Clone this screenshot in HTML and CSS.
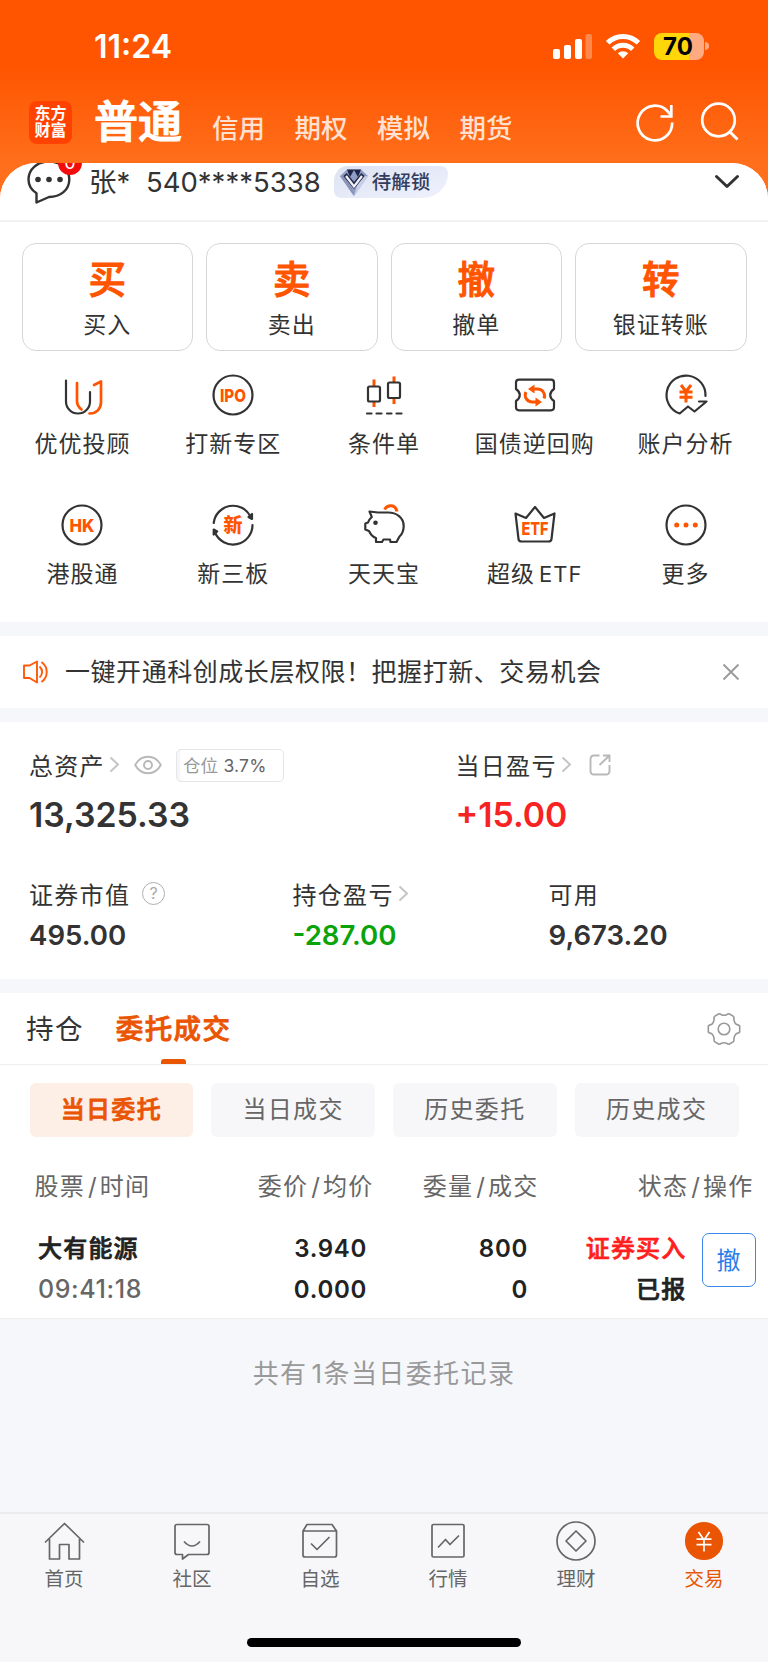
FILE: index.html
```html
<!DOCTYPE html>
<html lang="zh-CN">
<head>
    <meta charset="UTF-8">
    <meta name="viewport" content="width=device-width, initial-scale=1.0">
    <title>东方财富 - 交易</title>
    <link rel="stylesheet" href="styles.css">
</head>
<body>

<header class="header">
    <div class="status-bar">
        <span class="time">11:24</span>
        <svg class="signal" width="40" height="26" viewBox="0 0 40 26" fill="#fff">
            <rect x="0" y="16" width="7" height="10" rx="2"/>
            <rect x="11" y="12" width="7" height="14" rx="2"/>
            <rect x="22" y="6" width="7" height="20" rx="2"/>
            <rect x="32.500" y="1" width="6.500" height="25" rx="2" opacity=".3"/>
        </svg>
        <svg class="wifi" width="34" height="26" viewBox="0 0 34 26" fill="none" stroke="#fff" stroke-width="5">
            <path d="M1.600 9.700A22 22 0 0 1 32.400 9.700"/>
            <path d="M7.300 16.200A13.800 13.800 0 0 1 26.700 16.200"/>
            <path d="M17 25.500l-5.200-5.300a7.800 7.800 0 0 1 10.400 0z" fill="#fff" stroke="none"/>
        </svg>
        <div class="battery">70</div>
        <div class="battery-cap"></div>
    </div>
    <nav class="top-nav">
        <div class="logo">东方<br>财富</div>
        <div class="top-tabs">
            <span class="current">普通</span>
            <span>信用</span>
            <span>期权</span>
            <span>模拟</span>
            <span>期货</span>
        </div>
        <svg class="refresh" width="40" height="40" viewBox="0 0 40 40" fill="none" stroke="#fff" stroke-width="2.700">
            <path d="M37.200 20.500A17.300 17.300 0 1 1 32.800 9.500L36 13.200"/>
            <path d="M36.300 3v11.500H25.500"/>
        </svg>
        <svg class="search" width="40" height="40" viewBox="0 0 40 40" fill="none" stroke="#fff" stroke-width="2.700">
            <circle cx="18.500" cy="18" r="16.300"/>
            <path d="M29.500 29.500l8 8" stroke-width="3"/>
        </svg>
    </nav>
</header>

<main class="sheet">
    <section class="account">
        <div class="chat">
            <svg width="44" height="46" viewBox="0 0 44 46" fill="none" stroke="#333" stroke-width="2.400" stroke-linejoin="round">
                <path d="M9.500 43.500V34.200C4.500 31 1.500 26 1.500 20.500 1.500 10 10.500 2.500 22 2.500s20.300 7.500 20.300 18S33.500 38 22 38z"/>
                <g fill="#333" stroke="none"><circle cx="11" cy="20.500" r="2.800"/><circle cx="22" cy="20.500" r="2.800"/><circle cx="33" cy="20.500" r="2.800"/></g>
            </svg>
            <span class="unread">0</span>
        </div>
        <span class="name">张*</span>
        <span class="number">540****5338</span>
        <div class="level">
            <svg width="30" height="29" viewBox="0 0 30 29">
                <path d="M1 8L8 1.500H22L29 8 15 28z" fill="#8f9cc4"/>
                <path d="M8 1.500L11 9 15 2l4 7 3-7.500z" fill="#1e2549"/>
                <path d="M1 8h8l6 20z" fill="#8a94b8"/>
                <path d="M29 8h-8l-6 20z" fill="#c9d0e6"/>
                <path d="M6 6.500l9 11 9-11" fill="none" stroke="#272d4d" stroke-width="4.500"/>
                <path d="M7 8l8 10.500 8-10.500" fill="none" stroke="#f2f3fa" stroke-width="2.200"/>
            </svg>
            待解锁
        </div>
        <svg class="expand" width="26" height="16" viewBox="0 0 26 16" fill="none" stroke="#333" stroke-width="3" stroke-linecap="round" stroke-linejoin="round"><path d="M2.500 2.500L13 12.500l10.500-10"/></svg>
    </section>

    <section class="trade">
        <div class="trade-btn"><b>买</b>买入</div>
        <div class="trade-btn"><b>卖</b>卖出</div>
        <div class="trade-btn"><b>撤</b>撤单</div>
        <div class="trade-btn"><b>转</b>银证转账</div>
    </section>

    <section class="tools">
        <div class="tool">
            <svg viewBox="0 0 44 44"><path d="M6 7.500V28.500a12 12 0 0 0 24 0V19"/><path class="o" d="M17 10V28c0 4 1.800 6.500 4.500 8.500M34 12l7-3.500V29c0 7-4.500 11.500-11.500 11.500"/></svg>
            优优投顾
        </div>
        <div class="tool">
            <svg viewBox="0 0 44 44"><circle cx="22" cy="22" r="19.500"/><text x="22" y="28.500" textLength="26" lengthAdjust="spacingAndGlyphs">IPO</text></svg>
            打新专区
        </div>
        <div class="tool">
            <svg viewBox="0 0 44 44"><path class="o thick" d="M12 6.500V13M12 28v6M32 3.500V9M32 25v6"/><rect x="6" y="13.500" width="12" height="15" rx="1.500"/><rect x="26" y="9.500" width="12" height="15.500" rx="1.500"/><path d="M5 40.500h4.500M14.500 40.500h5M25 40.500h4.500M34.500 40.500h5"/></svg>
            条件单
        </div>
        <div class="tool">
            <svg viewBox="0 0 44 44"><path d="M6 6.700H38q3 0 3 3v6.300q-3.800 2.500-3.800 6t3.800 6v6.300q0 3-3 3H6q-3 0-3-3V28q3.800-2.500 3.800-6T3 16V9.700q0-3 3-3z"/><path class="o thick" d="M21 16h3.500a7 7 0 0 1 6.600 9.500M23 29h-3.500a7 7 0 0 1-6.600-10"/><path class="of" d="M21.500 11.500v9l-6.500-4.500zM22.500 24.500v9l6.500-4.500z"/></svg>
            国债逆回购
        </div>
        <div class="tool">
            <svg viewBox="0 0 44 44"><path d="M41.500 23A19.500 19.500 0 1 0 15.700 40.500L24 33.500l6.500 5L42.500 28.500H35"/><path class="o thick" d="M17 12l5 6.500 5-6.500M22 18.500V29.500M15.500 19h13M15.500 24.200h13"/></svg>
            账户分析
        </div>
        <div class="tool">
            <svg viewBox="0 0 44 44"><circle cx="22" cy="22" r="19.500"/><text x="22" y="28.500" textLength="25" lengthAdjust="spacingAndGlyphs">HK</text></svg>
            港股通
        </div>
        <div class="tool">
            <svg viewBox="0 0 44 44"><path d="M2.700 20A19.500 19.500 0 0 1 39.500 13.500M41.500 22A19.500 19.500 0 0 1 4 29.500"/><path d="M41 11v5l-3.500-2zM2.700 31.500v-5l3.500 2z" fill="#333"/><text class="xin" x="22" y="29">新</text></svg>
            新三板
        </div>
        <div class="tool">
            <svg viewBox="0 0 44 44"><path d="M24 9.500H16L7.500 8.500l2.300 5.500C8 15.500 6.700 17.300 6 19.500l-2.700 1v6L7 28c1.500 3.300 4 6 7 7v4h6l1.500-2.500H28l.5 2.500h6l3-5.500c2.800-2.500 4.200-6 4.200-10.500C41.700 14.500 34.500 9.500 26 9.500z"/><circle cx="13.500" cy="19.700" r="2.300" fill="#333" stroke="none"/><path class="o thick" d="M22.500 6.500C26 1 33.500 1.500 35 8.500"/></svg>
            天天宝
        </div>
        <div class="tool">
            <svg viewBox="0 0 44 44"><path d="M2.500 10.500L13 15l9-11 9 11 10.500-4.500L38.500 36q-.3 2.500-3 2.500h-27q-2.700 0-3-2.500z"/><text x="22" y="32" textLength="27" lengthAdjust="spacingAndGlyphs">ETF</text></svg>
            <span>超级<i>ETF</i></span>
        </div>
        <div class="tool">
            <svg viewBox="0 0 44 44"><circle cx="22" cy="22" r="19.500"/><path class="of" d="M10.200 22a2.500 2.500 0 1 0 5 0a2.500 2.500 0 1 0-5 0M19.500 22a2.500 2.500 0 1 0 5 0a2.500 2.500 0 1 0-5 0M28.800 22a2.500 2.500 0 1 0 5 0a2.500 2.500 0 1 0-5 0"/></svg>
            更多
        </div>
    </section>

    <section class="notice">
        <svg width="26" height="24" viewBox="0 0 26 24" fill="none" stroke="#ff5a0a" stroke-width="1.900" stroke-linejoin="round">
            <path d="M1 5.500h5.500L14 1.500v21L6.500 18H1z"/><path d="M16.500 6.500c3.500 3 3.500 8 0 11M18.500 2c7 5 7 15 0 20"/>
        </svg>
        <p>一键开通科创成长层权限！把握打新、交易机会</p>
        <svg width="18" height="18" viewBox="0 0 18 18" fill="none" stroke="#999" stroke-width="1.800"><path d="M1.500 1.500l15 15M16.500 1.500l-15 15"/></svg>
    </section>

    <section class="assets">
        <div class="row main">
            <div class="cell">
                <div class="label">总资产
                    <svg class="more" width="11" height="17" viewBox="0 0 11 17"><path d="M1.500 1.500l7.500 7-7.500 7"/></svg>
                    <svg class="eye" width="28" height="20" viewBox="0 0 28 20"><path d="M1.200 10C7-1 21-1 26.800 10 21 21 7 21 1.200 10z"/><circle cx="14" cy="10" r="4"/></svg>
                    <span class="tag">仓位 <em>3.7%</em></span>
                </div>
                <div class="value">13,325.33</div>
            </div>
            <div class="cell">
                <div class="label">当日盈亏
                    <svg class="more" width="11" height="17" viewBox="0 0 11 17"><path d="M1.500 1.500l7.500 7-7.500 7"/></svg>
                    <svg class="share" width="22" height="22" viewBox="0 0 22 22"><path d="M10.500 1.500H5q-3.500 0-3.500 3.500v12q0 3.500 3.500 3.500h12q3.500 0 3.500-3.500V11M10.500 11L20 2M14 1.500h6.500V8"/></svg>
                </div>
                <div class="value up">+15.00</div>
            </div>
        </div>
        <div class="row sub">
            <div class="cell">
                <div class="label">证券市值 <span class="help">?</span></div>
                <div class="value">495.00</div>
            </div>
            <div class="cell">
                <div class="label">持仓盈亏
                    <svg class="more" width="11" height="17" viewBox="0 0 11 17"><path d="M1.500 1.500l7.500 7-7.500 7"/></svg>
                </div>
                <div class="value down">-287.00</div>
            </div>
            <div class="cell">
                <div class="label">可用</div>
                <div class="value">9,673.20</div>
            </div>
        </div>
    </section>

    <section class="orders">
        <div class="order-tabs">
            <span>持仓</span>
            <span class="active">委托成交</span>
            <svg width="34" height="34" viewBox="0 0 34 34" fill="none" stroke="#999" stroke-width="1.600" stroke-linejoin="round">
                <path d="M12 1.800q1.500 0 2.300 1 2.700 1 5.400 0 .8-1 2.300-1l4.500 2.600q.8 1.500.3 3 .5 3.300 2.500 5 2.500.3 3.400 1.600v6q-.9 1.300-3.400 1.600-2 1.700-2.500 5 .5 1.500-.3 3L22 32.200q-1.500 0-2.300-1-2.700-1-5.400 0-.8 1-2.300 1l-4.500-2.600q-.8-1.500-.3-3-.5-3.300-2.500-5-2.500-.3-3.400-1.600v-6q.9-1.300 3.400-1.600 2-1.700 2.500-5-.5-1.500.3-3z"/><circle cx="17" cy="17" r="5.800"/>
            </svg>
        </div>
        <div class="filters">
            <span class="on">当日委托</span>
            <span>当日成交</span>
            <span>历史委托</span>
            <span>历史成交</span>
        </div>
        <div class="grid thead">
            <span>股票<i>/</i>时间</span>
            <span>委价<i>/</i>均价</span>
            <span>委量<i>/</i>成交</span>
            <span>状态<i>/</i>操作</span>
        </div>
        <div class="grid order">
            <div><span class="zh">大有能源</span><small>09:41:18</small></div>
            <div>3.940<br>0.000</div>
            <div>800<br>0</div>
            <div class="zh"><span class="buy">证券买入</span><br>已报</div>
            <button class="cancel">撤</button>
        </div>
    </section>
    <p class="summary">共有<i>1</i>条当日委托记录</p>
</main>

<footer class="tabbar">
    <div class="tabs">
        <div><svg viewBox="0 0 40 40"><path d="M1 21.500L20.500 2.500 40 21.500M5.500 18V38H15.500V23.500H25V38H35.500V18"/></svg>首页</div>
        <div><svg viewBox="0 0 40 40"><path d="M5 3.500H35q2 0 2 2v26q0 2-2 2H16.500L10.500 38V33.500H5q-2 0-2-2v-26q0-2 2-2zM12 20.500q8 9 16 0"/></svg>社区</div>
        <div><svg viewBox="0 0 40 40"><path d="M7 3.500H32l4.500 6.500v24q0 2-2 2H5q-2 0-2-2V10zM3 10H36.500M11 22.500l6 6L29.500 16"/></svg>自选</div>
        <div><svg viewBox="0 0 40 40"><rect x="4" y="3.500" width="32" height="32.500" rx="1.500"/><path d="M10 26.500l7.500-8 4.500 5L31 14.500"/></svg>行情</div>
        <div><svg viewBox="0 0 40 40"><circle cx="20" cy="20" r="19"/><path d="M20 10L30 20 20 30 10 20z"/></svg>理财</div>
        <div class="active"><svg viewBox="0 0 40 40"><circle cx="20" cy="20" r="18.200"/><path d="M14.500 11l5.500 8 5.500-8M20 19v11.500M12.500 18.200h15M12.500 23.700h15"/></svg>交易</div>
    </div>
    <div class="home-indicator"></div>
</footer>

</body>
</html>
```
FILE: styles.css
```css
* { box-sizing: border-box; }
body { margin: 0; width: 768px; height: 1662px; display: flex; flex-direction: column; overflow: hidden; font-family: Inter, "Noto Sans CJK SC", sans-serif; color: #333; background: linear-gradient(#ff5500 65px, #ff6f1c 165px); }
svg { display: block; flex: none; overflow: visible; }
p { margin: 0; }
i, em { font-style: normal; }

/* header */
.header { height: 163px; flex: none; color: #fff; }
.status-bar { display: flex; align-items: center; height: 92px; padding: 0 63px 0 94px; }
.time { flex: 1; margin-top: 2px; font-size: 32px; font-weight: 600; line-height: 40px; }
.wifi { margin: 0 14px 0 13px; }
.battery { width: 50px; height: 27px; padding-right: 2px; border-radius: 8px; background: linear-gradient(90deg, #ffd60a 71%, #ffaa80 71%); color: #000; font-size: 24px; font-weight: 700; line-height: 27px; text-align: center; }
.battery-cap { width: 4px; height: 8px; margin-left: 1px; border-radius: 0 4px 4px 0; background: #ffaa80; margin-right: -4px; }
.top-nav { display: flex; align-items: center; height: 61px; padding: 0 29px; }
.logo { width: 43px; height: 43px; border-radius: 8px; background: #ff4200; font-size: 16px; font-weight: 700; line-height: 17px; text-align: center; padding-top: 4px; }
.top-tabs { flex: 1; display: flex; align-items: baseline; margin: 4px 0 0 22px; line-height: 56px; font-size: 26.5px; font-weight: 500; color: rgba(255,255,255,.82); }
.top-tabs span { margin-right: 29.5px; }
.top-tabs .current { font-size: 44px; -webkit-text-stroke: 1.2px #fff; color: #fff; margin-right: 30px; }
.refresh { margin: -2px 25px 0 0; }
.search { margin: -2px -1px 0 0; }

.sheet { flex: 1; display: flex; flex-direction: column; background: #f6f7fa; border-radius: 36px 36px 0 0; overflow: hidden; }

/* account */
.account { display: flex; height: 59px; padding: 0 28px 0 27px; background: #fff; border-bottom: 2px solid #f2f2f2; font-size: 27.5px; line-height: 38px; }
.chat { position: relative; margin-top: -4px; }
.unread { position: absolute; left: 31px; top: -8px; width: 24px; height: 24px; border-radius: 50%; background: #f20d0d; color: #fff; font-size: 18px; line-height: 24px; text-align: center; }
.name { margin-left: 18px; width: 57px; }
.level { display: flex; align-items: center; width: 114px; height: 32px; margin: 3px 0 0 13px; padding-left: 5px; gap: 3px; border-radius: 16px 8px 28px 8px; background: linear-gradient(165deg, #dde2f2, #eff2fd); color: #333c5c; font-size: 19.500px; font-weight: 500; white-space: nowrap; }
.expand { margin: 11px 0 0 auto; }

/* trade buttons */
.trade { display: flex; gap: 13px; height: 129px; padding: 21px 21.500px 0; background: #fff; }
.trade-btn { flex: 1; height: 108px; border: 1px solid #d6d6d6; border-radius: 14px; display: flex; flex-direction: column; align-items: center; font-size: 23px; letter-spacing: 1px; line-height: 30px; }
.trade-btn b { margin-top: 11px; color: #ff5500; font-size: 37.500px; font-weight: 500; -webkit-text-stroke: 1px #ff5500; line-height: 50px; letter-spacing: 0; margin-bottom: 5px; }

/* shortcuts */
.tools { display: grid; grid-template-columns: repeat(5, 1fr); grid-auto-rows: 129.500px; height: 271px; padding: 22px 7px 0; background: #fff; }
.tool { display: flex; flex-direction: column; align-items: center; font-size: 23px; letter-spacing: 1px; line-height: 30px; }
.tool svg { width: 44px; height: 44px; margin-bottom: 12px; fill: none; stroke: #333; stroke-width: 2.200; stroke-linejoin: round; stroke-linecap: round; }
.tool .o { stroke: #ff5500; stroke-width: 2.700; }
.tool .thick { stroke-width: 3; stroke-linecap: butt; }
.tool .of { fill: #ff5500; stroke: none; }
.tool text { fill: #ff5500; stroke: none; font-size: 18px; font-weight: 800; letter-spacing: 0; text-anchor: middle; }
.tool .xin { font-size: 19px; }
.tool i { margin-left: 4px; font-size: 22px; }

/* notice */
.notice { display: flex; align-items: center; height: 72px; margin-top: 14px; padding: 0 28px 0 23px; background: #fff; font-size: 25px; letter-spacing: .55px; }
.notice p { flex: 1; margin-left: 16px; padding-bottom: 4px; }

/* assets */
.assets { height: 257px; margin-top: 14px; padding: 25px 29px 0; background: #fff; }
.row { display: flex; }
.sub { margin-top: 39px; }
.label { display: flex; align-items: center; height: 34px; font-size: 24px; letter-spacing: 1.300px; white-space: nowrap; }
.value { font-size: 33.800px; font-weight: 600; line-height: 44px; margin-top: 12px; }
.sub .value { font-size: 27.600px; line-height: 34px; margin-top: 8px; }
.main .cell:first-child { width: 426.500px; }
.sub .cell:first-child { width: 263.500px; }
.sub .cell:nth-child(2) { width: 256px; }
.up { color: #f72323; }
.down { color: #0aa30a; }
.label svg { margin-top: 1px; fill: none; stroke: #b8b8b8; stroke-width: 1.900; }
.label .more { margin-left: 4px; stroke: #c4c4c4; }
.label .eye { margin-left: 14px; }
.label .share { margin-left: 17px; }
.tag { width: 108px; height: 33px; margin: 2px 0 0 14px; padding-left: 6px; border: 1px solid #e6e6ea; border-radius: 5px; box-shadow: inset 3px 0 #f6f6f9; color: #999; font-size: 17.500px; line-height: 31px; letter-spacing: .2px; }
.tag em { color: #666; }
.help { width: 23px; height: 23px; margin-left: 12px; border: 1.500px solid #b0b0b0; border-radius: 50%; color: #aaa; font-size: 16px; line-height: 21px; letter-spacing: 0; text-align: center; }

/* orders */
.orders { height: 326px; margin-top: 14px; background: #fff; border-bottom: 1px solid #eee; }
.order-tabs { display: flex; align-items: center; height: 72px; padding: 0 27px 0 26px; border-bottom: 1px solid #eee; font-size: 27.500px; letter-spacing: 1.400px; }
.order-tabs span:first-child { padding-bottom: 3px; }
.order-tabs svg { margin-left: auto; }
.order-tabs .active { display: flex; flex-direction: column; align-items: center; height: 71px; margin-left: 32px; color: #ea5504; font-weight: 500; -webkit-text-stroke: .8px #ea5504; padding-top: 18px; line-height: 36px; }
.order-tabs .active::after { content: ""; width: 25px; height: 5px; margin-top: 12px; border-radius: 3px 3px 0 0; background: #ea5504; }
.filters { display: flex; gap: 18px; padding: 18px 29.500px 0; }
.filters span { flex: 1; height: 54px; border-radius: 6px; background: #f7f7fa; color: #666; font-size: 24px; letter-spacing: 1.300px; line-height: 53px; text-align: center; }
.filters .on { background: #fdeee6; color: #ea5504; font-weight: 500; -webkit-text-stroke: .8px #ea5504; }
.grid { display: grid; grid-template-columns: 150px 189px 165px 215px; text-align: right; white-space: nowrap; }
.grid > :first-child { text-align: left; }
.thead { padding: 33px 0 0 34.500px; color: #666; font-size: 24px; letter-spacing: 1.200px; line-height: 34px; }
.thead i { margin: 0 2px 0 3px; }
.order { grid-template-columns: 140px 189px 161px 158.500px 54px; padding: 24px 0 0 38px; font-size: 24px; font-weight: 600; letter-spacing: .7px; line-height: 41px; color: #222; }
.order .zh { font-weight: 500; letter-spacing: 1.200px; -webkit-text-stroke: .7px; }
.order small { display: block; color: #666; font-size: 25px; font-weight: 500; letter-spacing: .6px; }
.buy { color: #ff1f1f; }
.cancel { width: 54px; height: 54px; margin: 5px 0 0 15px; padding: 0 0 4px; border: 1px solid #3b87ec; border-radius: 7px; background: #fff; color: #2b7de9; font: 24px Inter, "Noto Sans CJK SC", sans-serif; }
.summary { margin-top: 37px; font-size: 26px; letter-spacing: 1.400px; line-height: 36px; color: #999; text-align: center; }
.summary i { margin: 0 0 0 4px; }

/* bottom bar */
.tabbar { height: 150px; flex: none; background: #f7f7fa; border-top: 2px solid #ececee; }
.tabs { display: flex; padding-top: 7px; }
.tabs div { flex: 1; display: flex; flex-direction: column; align-items: center; color: #666; font-size: 19.500px; line-height: 26px; }
.tabs svg { width: 40px; height: 40px; margin-bottom: 5px; fill: none; stroke: #666; stroke-width: 1.700; stroke-linejoin: round; }
.tabs .active { color: #ea5504; }
.tabs .active svg { fill: #ea5504; stroke: #ea5504; }
.tabs .active path { fill: none; stroke: #fff; }
.home-indicator { width: 274px; height: 9px; margin: 46px auto 0; border-radius: 5px; background: #000; }
```
